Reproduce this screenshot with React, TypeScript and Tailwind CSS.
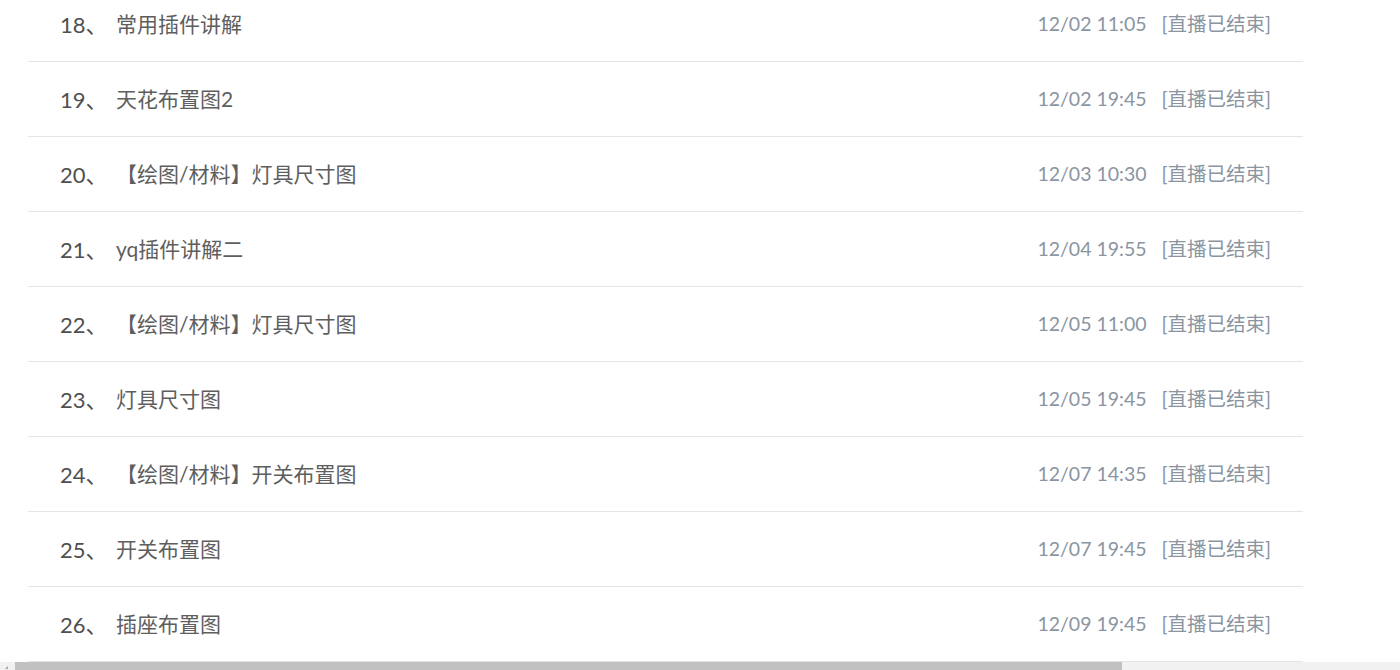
import React from "react";

const rows = [
  ["18", "常用插件讲解", "12/02 11:05"],
  ["19", "天花布置图2", "12/02 19:45"],
  ["20", "【绘图/材料】灯具尺寸图", "12/03 10:30"],
  ["21", "yq插件讲解二", "12/04 19:55"],
  ["22", "【绘图/材料】灯具尺寸图", "12/05 11:00"],
  ["23", "灯具尺寸图", "12/05 19:45"],
  ["24", "【绘图/材料】开关布置图", "12/07 14:35"],
  ["25", "开关布置图", "12/07 19:45"],
  ["26", "插座布置图", "12/09 19:45"],
];

export default function App() {
  return (
    <div
      className="h-[670px] w-[1400px] overflow-hidden bg-white flex flex-col"
      style={{ fontFamily: '"Lato", "Noto Sans CJK SC", sans-serif' }}
    >
      <div className="mt-[-13px] ml-[28px] w-[1275px] flex flex-col">
        {rows.map(([n, t, d]) => (
          <div
            key={n}
            className="h-[75px] border-b border-[#e5e5e5] flex items-center justify-between px-[32px]"
          >
            <div className="flex items-center">
              <span className="w-[56px] text-[22px] text-[#4f4f4f]">{n}、</span>
              <span className="text-[21px] text-[#5e5e5e]">{t}</span>
            </div>
            <div className="flex items-center text-[19.5px] text-[#8a95a1]">
              <span>{d}</span>
              <span className="ml-[15px]">[直播已结束]</span>
            </div>
          </div>
        ))}
      </div>
      <div className="h-[8px] flex bg-[#f1f1f1] shrink-0">
        <div className="w-[15px] relative">
          <div className="absolute left-[5px] bottom-[1px] w-0 h-0 border-l-[3px] border-l-transparent border-b-[3px] border-b-[#a3a3a3]" />
        </div>
        <div className="w-[1107px] bg-[#c1c1c1]" />
      </div>
    </div>
  );
}
